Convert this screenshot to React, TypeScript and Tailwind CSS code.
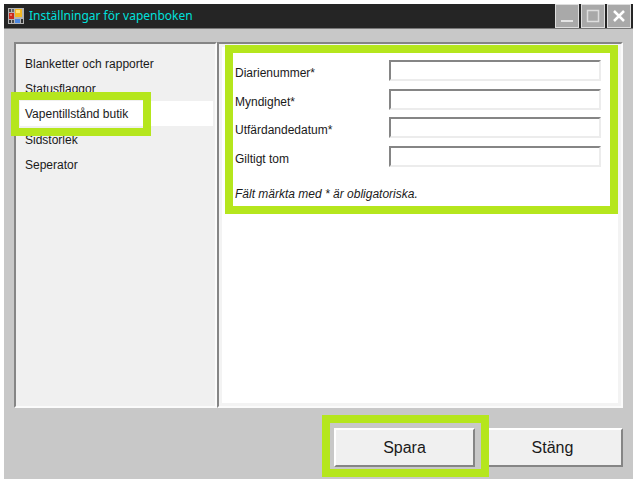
import { useState } from "react";

const menuItems = [
  "Blanketter och rapporter",
  "Statusflaggor",
  "Vapentillstånd butik",
  "Sidstorlek",
  "Seperator",
];

const fields = [
  { id: "diarienummer", label: "Diarienummer*" },
  { id: "myndighet", label: "Myndighet*" },
  { id: "utfardandedatum", label: "Utfärdandedatum*" },
  { id: "giltigt", label: "Giltigt tom" },
];

const captionButton =
  "flex h-6 w-6 items-center justify-center border border-[#dedede] bg-[#a9a9a9]";
const sunken =
  "border-2 border-t-[#858585] border-l-[#858585] border-r-[#fbfbfb] border-b-[#fbfbfb]";
const raised =
  "h-[39px] w-[141px] border-2 border-t-white border-l-white border-r-[#858585] border-b-[#858585] bg-[#f0f0f0] text-base text-[#1a1a1a]";
const marker = "pointer-events-none absolute border-8 border-[#b5e61d]";

function AppIcon() {
  return (
    <svg width="16" height="16" viewBox="0 0 16 16" aria-hidden="true">
      <rect width="16" height="16" fill="#b4b4b4" />
      <rect x="1" y="1" width="2" height="3" fill="#4a4a4a" />
      <rect x="4" y="1" width="2" height="3" fill="#6a6a6a" />
      <rect x="1" y="5" width="5" height="6" fill="#c92a1c" />
      <rect x="2" y="6" width="2" height="2" fill="#ee7363" />
      <rect x="1" y="12" width="2" height="3" fill="#333333" />
      <rect x="4" y="12" width="2" height="3" fill="#4a4a4a" />
      <rect x="7" y="1" width="7" height="8" fill="#f2b722" />
      <rect x="8" y="2" width="4" height="3" fill="#ffe07a" />
      <rect x="7" y="11" width="5" height="4" fill="#4a86e0" />
      <rect x="13" y="11" width="2" height="4" fill="#333333" />
    </svg>
  );
}

export default function App() {
  const [active, setActive] = useState("Vapentillstånd butik");

  return (
    <div className="min-h-screen bg-white py-1 pr-[5px] pl-1 font-['Liberation_Sans',Arial,sans-serif] text-xs text-[#1a1a1a]">
      <div className="bg-[#c8c8c8] pb-3">
        {/* Title bar */}
        <header className="flex h-[25px] items-center border-b border-[#777777] bg-[#252525] pl-1">
          <AppIcon />
          <h1 className="ml-[5px] font-['Noto_Sans',sans-serif] text-xs text-[#00e0dc]">
            Inställningar för vapenboken
          </h1>
          <div className="ml-auto flex gap-[2px] pr-[2px]">
            <button type="button" aria-label="Minimera" className={captionButton}>
              <svg width="16" height="16" viewBox="0 0 16 16">
                <path d="M2 13h12" stroke="#e4e4e4" strokeWidth="2" />
              </svg>
            </button>
            <button type="button" aria-label="Maximera" className={captionButton}>
              <svg width="16" height="16" viewBox="0 0 16 16" fill="none">
                <rect x="2.5" y="2.5" width="11" height="11" stroke="#dedede" strokeWidth="1.5" />
              </svg>
            </button>
            <button type="button" aria-label="Avsluta" className={captionButton}>
              <svg width="16" height="16" viewBox="0 0 16 16">
                <path d="M3 3l10 10M13 3L3 13" stroke="#ffffff" strokeWidth="2.5" />
              </svg>
            </button>
          </div>
        </header>

        <main className="mx-[10px] mt-[13px] flex h-[366px]">
          <nav className={`relative w-[203px] bg-[#f0f0f0] pt-[6px] pr-[2px] pl-1 ${sunken}`}>
            <ul className="grid h-[127px] grid-rows-5">
              {menuItems.map((item) => (
                <li key={item} className="flex">
                  <button
                    type="button"
                    onClick={() => setActive(item)}
                    className={`w-full pt-[2px] pl-[5px] text-left ${item === active ? "bg-white" : ""}`}
                  >
                    {item}
                  </button>
                </li>
              ))}
            </ul>
            <div className={`${marker} top-12 -left-[5px] h-11 w-[140px]`} />
          </nav>

          <form
            className={`relative flex-1 bg-white pt-4 pr-5 pl-4 shadow-[inset_0_0_0_3px_#f3f3f3] ${sunken}`}
          >
            <div className="grid h-[114px] grid-rows-4">
              {fields.map((field) => (
                <div key={field.id} className="flex items-start">
                  <label htmlFor={field.id} className="w-[154px] pt-[5px]">
                    {field.label}
                  </label>
                  <input
                    id={field.id}
                    type="text"
                    className="h-[21px] min-w-0 flex-1 border-2 border-t-[#858585] border-r-[#ececec] border-b-[#ececec] border-l-[#858585] bg-white px-1 outline-none"
                  />
                </div>
              ))}
            </div>
            <p className="mt-3 italic">Fält märkta med * är obligatoriska.</p>
            <div className={`${marker} top-[1px] right-[3px] left-[6px] h-[169px]`} />
          </form>
        </main>

        <footer className="mx-[10px] mt-5 flex justify-end gap-[7px]">
          <div className="relative">
            <button type="button" className={raised}>
              Spara
            </button>
            <div className={`${marker} -top-[13px] -left-3 z-10 h-[62px] w-[167px]`} />
          </div>
          <button type="button" className={raised}>
            Stäng
          </button>
        </footer>
      </div>
    </div>
  );
}
